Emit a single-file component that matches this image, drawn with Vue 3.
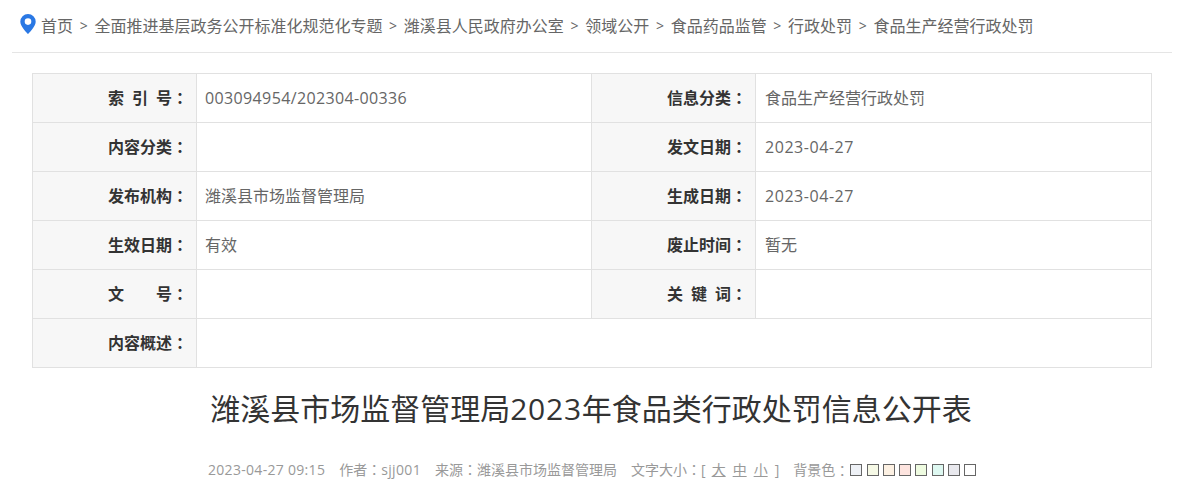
<script setup>
const crumbs = ['首页','全面推进基层政务公开标准化规范化专题','潍溪县人民政府办公室','领域公开','食品药品监管','行政处罚','食品生产经营行政处罚']
const rows = [
  [['索\u2002引\u2002号','003094954/202304-00336'],['信息分类','食品生产经营行政处罚']],
  [['内容分类',''],['发文日期','2023-04-27']],
  [['发布机构','潍溪县市场监督管理局'],['生成日期','2023-04-27']],
  [['生效日期','有效'],['废止时间','暂无']],
  [['文　　号',''],['关\u2002键\u2002词','']],
]
const swatches = ['#eef1f6','#f6f9e6','#fdf1e3','#fde4df','#eefbe0','#def8f1','#e9e9ee','#ffffff']
const valClass = (v) => ({ code: /^\d{9}/.test(v), day: /^\d{4}-/.test(v) })
</script>

<template>
  <div class="page">
    <nav class="crumbs">
      <svg class="pin" width="16" height="20" viewBox="0 0 16 20">
        <path fill="#2a78e4" fill-rule="evenodd" d="M8 0a7.700 7.700 0 0 0-7.700 7.700C.3 12.600 8 20 8 20s7.700-7.400 7.700-12.300A7.700 7.700 0 0 0 8 0zm0 4.300a3.300 3.300 0 1 1 0 6.600 3.300 3.300 0 0 1 0-6.600z"/>
      </svg>
      <template v-for="(c, i) in crumbs" :key="c">
        <span v-if="i" class="sep">&gt;</span>
        <span>{{ c }}</span>
      </template>
    </nav>
    <div class="info">
      <template v-for="(r, i) in rows" :key="i">
        <template v-for="cell in r" :key="cell[0]">
          <div class="lab">{{ cell[0] }}<span class="colon">：</span></div>
          <div class="val" :class="valClass(cell[1])">{{ cell[1] }}</div>
        </template>
      </template>
      <div class="lab">内容概述<span class="colon">：</span></div>
      <div class="val wide"></div>
    </div>
    <h1 class="title">潍溪县市场监督管理局<span class="year">2023</span>年食品类行政处罚信息公开表</h1>
    <div class="meta">
      <span class="date">2023-04-27 09:15</span>
      <span>作者<span class="colon">：</span><span class="author">sjj001</span></span>
      <span>来源<span class="colon">：</span>潍溪县市场监督管理局</span>
      <span class="size">文字大小<span class="colon">：</span>[<u>大</u><u>中</u><u>小</u>]</span>
      <span class="bg">背景色<span class="colon">：</span><i v-for="s in swatches" :key="s" :style="{ background: s }"></i></span>
    </div>
  </div>
</template>

<style scoped>
.page {
  width: 1186px;
  height: 479px;
  overflow: hidden;
  box-sizing: border-box;
  padding: 0 14px 0 12px;
  font-family: "Open Sans", "Noto Sans CJK SC", sans-serif;
  color: #666;
}
.crumbs {
  height: 53px;
  box-sizing: border-box;
  border-bottom: 1px solid #e5e5e5;
  display: flex;
  align-items: center;
  font-size: 16px;
  line-height: 52px;
  padding-left: 8px;
  color: #666;
  white-space: nowrap;
}
.pin { margin-right: 5px; margin-top: -4px; }
.sep { margin: 0 6.7px; font-size: 14px; }
.colon { font-family: "Noto Sans CJK TC", sans-serif; }
.info {
  margin: 20px 8px 0 20px;
  display: grid;
  grid-template-columns: 164px 395px 164px 396px;
  grid-auto-rows: 49px;
  border-top: 1px solid #e1e1e1;
  border-left: 1px solid #e1e1e1;
  box-sizing: border-box;
  width: 1120px;
  height: 295px;
  font-size: 16px;
}
.lab, .val {
  border-right: 1px solid #e1e1e1;
  border-bottom: 1px solid #e1e1e1;
  line-height: 48px;
  box-sizing: border-box;
}
.lab {
  background: #f7f7f7;
  font-weight: 700;
  color: #333;
  text-align: right;
  padding-right: 8px;
  line-height: 46px;
}
.val { padding-left: 8px; color: #666; }
.val:nth-child(4n) { padding-left: 9px; }
.val.code { letter-spacing: 0.37px; }
.val.day { letter-spacing: 0.55px; }
.wide { grid-column: 2 / 5; }
.title {
  margin: 19px 2px 0 0;
  font-size: 30px;
  font-weight: 400;
  line-height: 44px;
  text-align: center;
  color: #333;
}
.year { letter-spacing: 0.75px; }
.meta {
  margin-top: 28px;
  display: flex;
  align-items: center;
  padding-left: 196px;
  gap: 14px;
  font-size: 14px;
  line-height: 20px;
  color: #999;
  white-space: nowrap;
}
.date { letter-spacing: 0.3px; }
.author { letter-spacing: 0.35px; }
.size u { text-decoration: underline; margin: 0 3.500px; }
.size u:first-of-type { margin-left: 6px; }
.size u:last-of-type { margin-right: 7px; }
.bg { display: flex; align-items: center; }
.bg i {
  width: 10px;
  height: 10px;
  border: 1px solid #666;
  margin-right: 4.3px;
  display: block;
  flex: none;
}
.bg i:first-of-type { margin-left: 1px; }
</style>
